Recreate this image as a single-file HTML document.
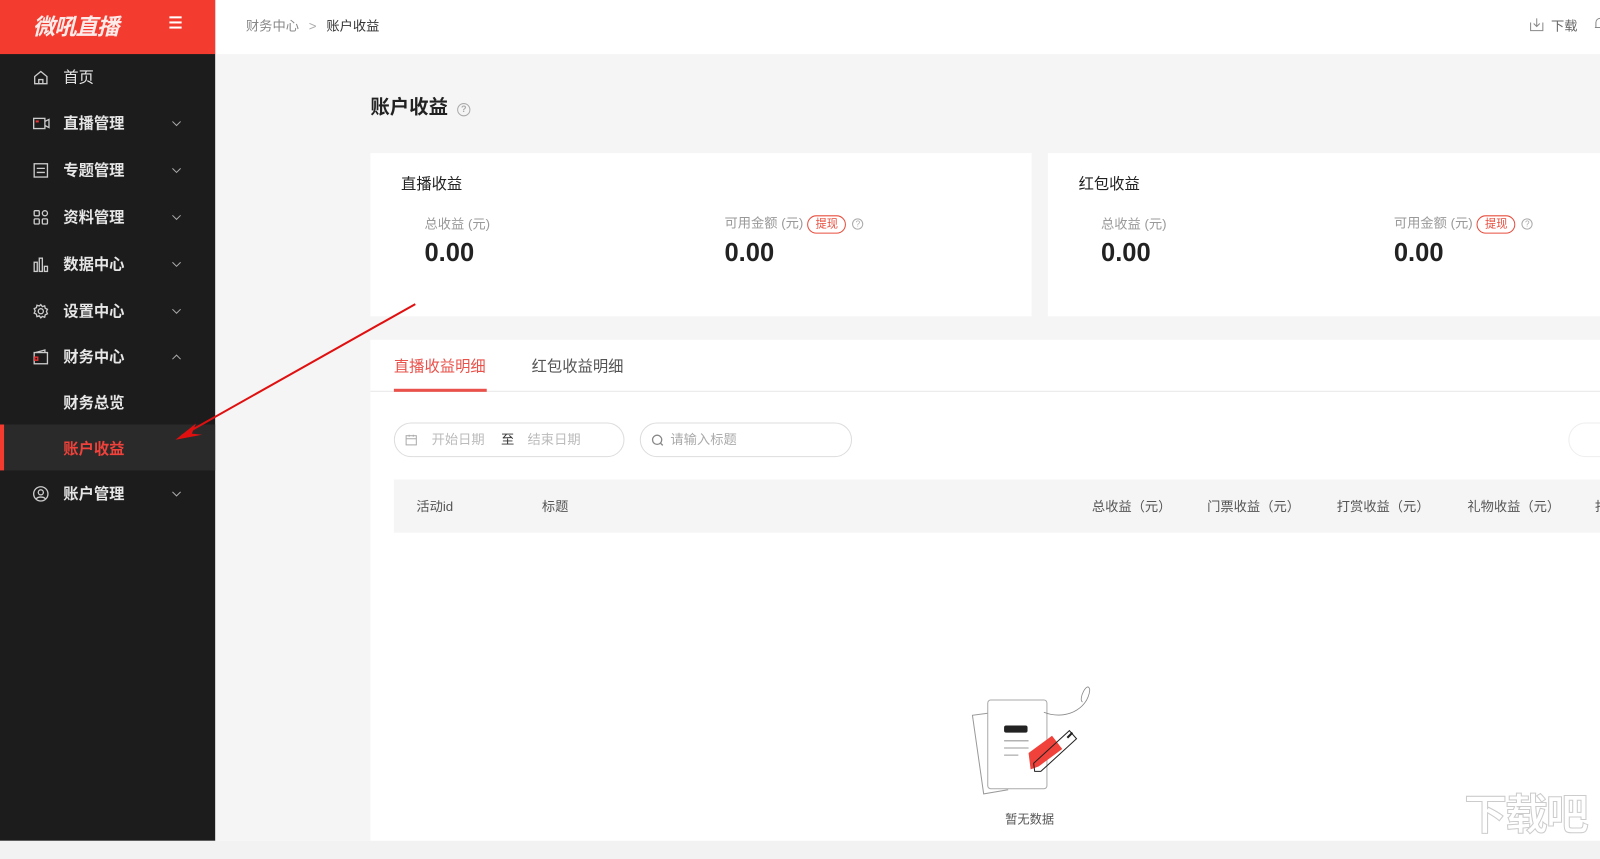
<!DOCTYPE html>
<html><head><meta charset="utf-8"><style>
*{margin:0;padding:0;box-sizing:border-box}
body{width:1600px;height:842px;overflow:hidden;background:#f2f2f2;font-family:"Liberation Sans","Noto Sans CJK SC",sans-serif;position:relative}
#wrap{position:absolute;left:0;top:0;width:1568px;height:825px;transform:scale(1.0204);transform-origin:0 0;background:#fff}
.abs{position:absolute}
#side{left:0;top:0;width:211px;height:824px;background:#1c1c1c}
#logo{left:0;top:0;width:211px;height:53px;background:#f33b2f}
.mi{position:absolute;left:0;width:211px;height:46px;color:#e6e6e6;font-size:15px;font-weight:bold;line-height:50px}
.mi .t{position:absolute;left:62px}
.mi svg.ic{position:absolute;left:32px;top:16px}
.mi .ch{position:absolute;left:168px;top:20px}
#main{left:211px;top:53px;width:1389px;height:771px;background:#f5f5f5}
#top{left:211px;top:0;width:1389px;height:53px;background:#fff}
.card{background:#fff;position:absolute}
.lbl{color:#999;font-size:13px;position:absolute}
.num{color:#222;font-size:25px;font-weight:bold;position:absolute}
.tag{display:inline-block;border:1px solid #e74c3c;color:#e74c3c;border-radius:10px;font-size:11px;padding:0 7px;line-height:16px;margin-left:4px}
.q{display:inline-block;width:11px;height:11px;border:1px solid #aaa;border-radius:50%;font-size:8px;line-height:9px;text-align:center;color:#aaa;margin-left:6px;vertical-align:1px}
.th{position:absolute;top:486px;font-size:13px;color:#555}
</style></head><body>
<div id="wrap">
<div id="side" class="abs"></div>
<div id="logo" class="abs">
 <div class="abs" style="left:32px;top:9px;color:#fff;font-size:22px;font-style:italic;font-weight:bold;letter-spacing:-1px;opacity:.9">微吼直播</div>
 <div class="abs" style="left:166px;top:16px;width:12px;height:2px;background:#fff;box-shadow:0 5px 0 #fff,0 10px 0 #fff"></div>
</div>
<div class="mi" style="top:52px;font-weight:normal"><svg class="ic" width="16" height="16" viewBox="0 0 16 16" fill="none" stroke="#ccc" stroke-width="1.3"><path d="M2 7L8 2l6 5v7H2z M6 14v-4h4v4"/></svg><span class="t">首页</span></div>
<div class="mi" style="top:97px"><svg class="ic" width="18" height="16" viewBox="0 0 18 16" fill="none" stroke="#ccc" stroke-width="1.3"><rect x="1" y="3" width="11" height="10"/><path d="M12 6l4-2v8l-4-2"/><rect x="3" y="5" width="3" height="2" fill="#e33" stroke="none"/></svg><span class="t">直播管理</span><svg class="ch" width="10" height="8"><path d="M1 2l4 4 4-4" stroke="#aaa" fill="none"/></svg></div>
<div class="mi" style="top:143px"><svg class="ic" width="16" height="16" viewBox="0 0 16 16" fill="none" stroke="#ccc" stroke-width="1.3"><rect x="1.5" y="1.5" width="13" height="13"/><path d="M4 6h8M4 10h8"/></svg><span class="t">专题管理</span><svg class="ch" width="10" height="8"><path d="M1 2l4 4 4-4" stroke="#aaa" fill="none"/></svg></div>
<div class="mi" style="top:189px"><svg class="ic" width="16" height="16" viewBox="0 0 16 16" fill="none" stroke="#ccc" stroke-width="1.3"><rect x="1.5" y="1.5" width="5" height="5" rx="1"/><rect x="9.5" y="1.5" width="5" height="5" rx="2.5"/><rect x="1.5" y="9.5" width="5" height="5" rx="1"/><rect x="9.5" y="9.5" width="5" height="5" rx="1"/></svg><span class="t">资料管理</span><svg class="ch" width="10" height="8"><path d="M1 2l4 4 4-4" stroke="#aaa" fill="none"/></svg></div>
<div class="mi" style="top:235px"><svg class="ic" width="16" height="16" viewBox="0 0 16 16" fill="none" stroke="#ccc" stroke-width="1.3"><rect x="1.5" y="6" width="3" height="9"/><rect x="6.5" y="2" width="3" height="13"/><rect x="11.5" y="10" width="3" height="5"/></svg><span class="t">数据中心</span><svg class="ch" width="10" height="8"><path d="M1 2l4 4 4-4" stroke="#aaa" fill="none"/></svg></div>
<div class="mi" style="top:281px"><svg class="ic" width="16" height="16" viewBox="0 0 16 16" fill="none" stroke="#ccc" stroke-width="1.3"><circle cx="8" cy="8" r="2.5"/><path d="M8 1.5l1.5 2 2.3-.8.5 2.4 2.2 1-1 2.2 1 2.2-2.2 1-.5 2.4-2.3-.8L8 14.5l-1.5-2-2.3.8-.5-2.4-2.2-1 1-2.2-1-2.2 2.2-1 .5-2.4 2.3.8z"/></svg><span class="t">设置中心</span><svg class="ch" width="10" height="8"><path d="M1 2l4 4 4-4" stroke="#aaa" fill="none"/></svg></div>
<div class="mi" style="top:326px"><svg class="ic" width="16" height="16" viewBox="0 0 16 16" fill="none" stroke="#ccc" stroke-width="1.3"><rect x="1.5" y="3.5" width="13" height="11"/><path d="M3 3.5L12 1v2.5"/><rect x="2" y="8" width="3" height="3" stroke="#e33"/></svg><span class="t">财务中心</span><svg class="ch" width="10" height="8"><path d="M1 6l4-4 4 4" stroke="#aaa" fill="none"/></svg></div>
<div class="mi" style="top:371px"><span class="t">财务总览</span></div>
<div class="abs" style="left:0;top:416px;width:211px;height:45px;background:#2a2a2a"></div>
<div class="abs" style="left:0;top:416px;width:4px;height:45px;background:#f33b2f"></div>
<div class="mi" style="top:416px;color:#f0413a"><span class="t">账户收益</span></div>
<div class="mi" style="top:460px"><svg class="ic" width="16" height="16" viewBox="0 0 16 16" fill="none" stroke="#ccc" stroke-width="1.3"><circle cx="8" cy="8" r="7"/><circle cx="8" cy="6.5" r="2.5"/><path d="M3.5 13c1.5-2.5 7.5-2.5 9 0"/></svg><span class="t">账户管理</span><svg class="ch" width="10" height="8"><path d="M1 2l4 4 4-4" stroke="#aaa" fill="none"/></svg></div>

<div id="top" class="abs">
 <div class="abs" style="left:30px;top:15px;font-size:13px;color:#888">财务中心 <span style="margin:0 6px;color:#aaa">&gt;</span> <span style="color:#333">账户收益</span></div>
 <svg class="abs" style="left:1288px;top:17px" width="14" height="14" viewBox="0 0 14 14" fill="none" stroke="#888"><path d="M1 5v8h12V5M7 1v8M4 6l3 3 3-3"/></svg>
 <div class="abs" style="left:1309px;top:15px;font-size:13px;color:#666">下载</div>
 <svg class="abs" style="left:1350px;top:16px" width="14" height="14" viewBox="0 0 14 14" fill="none" stroke="#888"><path d="M3 11V6a4 4 0 018 0v5H2"/></svg>
</div>
<div id="main" class="abs"></div>
<div class="abs" style="left:363px;top:90px;font-size:19px;font-weight:bold;color:#222">账户收益<span class="q" style="margin-left:9px;width:13px;height:13px;font-size:9px;line-height:11px">?</span></div>

<div class="card" style="left:363px;top:150px;width:648px;height:160px">
 <div class="abs" style="left:30px;top:19px;font-size:15px;color:#222">直播收益</div>
 <div class="lbl" style="left:53px;top:59px">总收益 (元)</div>
 <div class="num" style="left:53px;top:84px;font-weight:600">0.00</div>
 <div class="lbl" style="left:347px;top:58px">可用金额 (元)<span class="tag">提现</span><span class="q">?</span></div>
 <div class="num" style="left:347px;top:84px;font-weight:600">0.00</div>
</div>
<div class="card" style="left:1027px;top:150px;width:573px;height:160px">
 <div class="abs" style="left:30px;top:19px;font-size:15px;color:#222">红包收益</div>
 <div class="lbl" style="left:52px;top:59px">总收益 (元)</div>
 <div class="num" style="left:52px;top:84px;font-weight:600">0.00</div>
 <div class="lbl" style="left:339px;top:58px">可用金额 (元)<span class="tag">提现</span><span class="q">?</span></div>
 <div class="num" style="left:339px;top:84px;font-weight:600">0.00</div>
</div>

<div class="card" style="left:363px;top:333px;width:1237px;height:491px">
 <div class="abs" style="left:0;top:50px;width:1237px;height:1px;background:#e8e8e8"></div>
 <div class="abs" style="left:23px;top:15px;font-size:15px;color:#e9514a">直播收益明细</div>
 <div class="abs" style="left:23px;top:48px;width:91px;height:3px;background:#e9514a"></div>
 <div class="abs" style="left:158px;top:15px;font-size:15px;color:#555">红包收益明细</div>
 <div class="abs" style="left:23px;top:81px;width:226px;height:34px;border:1px solid #ddd;border-radius:17px;font-size:13px;color:#bbb;line-height:32px">
  <svg class="abs" style="left:10px;top:10px" width="12" height="12" viewBox="0 0 12 12" fill="none" stroke="#aaa"><rect x="1" y="2" width="10" height="9"/><path d="M1 5h10M4 1v2M8 1v2"/></svg>
  <span class="abs" style="left:36px">开始日期</span><span class="abs" style="left:104px;color:#333">至</span><span class="abs" style="left:130px">结束日期</span></div>
 <div class="abs" style="left:264px;top:81px;width:208px;height:34px;border:1px solid #ddd;border-radius:17px;font-size:13px;color:#aaa;line-height:32px">
  <svg class="abs" style="left:10px;top:10px" width="13" height="13" viewBox="0 0 13 13" fill="none" stroke="#888" stroke-width="1.3"><circle cx="6" cy="6" r="4.5"/><path d="M9.5 9.5l2 2"/></svg>
  <span class="abs" style="left:29px">请输入标题</span></div>
 <div class="abs" style="left:1174px;top:81px;width:80px;height:34px;border:1px solid #eee;border-radius:17px"></div>
 <div class="abs" style="left:23px;top:137px;width:1214px;height:52px;background:#f5f5f5"></div>
</div>
<div class="th" style="left:408px">活动id</div>
<div class="th" style="left:531px">标题</div>
<div class="th" style="left:1070px">总收益（元）</div>
<div class="th" style="left:1183px">门票收益（元）</div>
<div class="th" style="left:1310px">打赏收益（元）</div>
<div class="th" style="left:1438px">礼物收益（元）</div>
<div class="th" style="left:1563px">打</div>

<svg class="abs" style="left:948px;top:666px" width="125" height="115" viewBox="0 0 125 115" fill="none">
 <path d="M20 33 L5 35 L16 112 L40 108" stroke="#999" stroke-width="1"/>
 <rect x="20" y="20" width="58" height="87" rx="3" stroke="#aaa" stroke-width="1"/>
 <rect x="36" y="45" width="23" height="7" rx="2" fill="#222"/>
 <path d="M36 60h24M36 67h24M36 74h14" stroke="#999"/>
 <path d="M60 72 L83 55 L93 68 L70 85 L62 88Z" fill="#f0413a"/>
 <path d="M72 90 L107 58 L100 50 L65 82 L66 90Z" stroke="#222" stroke-width="1"/>
 <path d="M98 57 l5 -5" stroke="#222" stroke-width="2"/>
 <path d="M75 32 C95 40 118 30 120 10 C118 0 108 20 113 22" stroke="#888" stroke-width=".8"/>
</svg>
<div class="abs" style="left:985px;top:794px;font-size:12px;color:#555">暂无数据</div>

<svg class="abs" style="left:170px;top:295px" width="242" height="140"><path d="M237 3 L8 132" stroke="#e01010" stroke-width="2"/><path d="M2 136 L22 120 L18 130 L28 131Z" fill="#e01010"/></svg>
<div class="abs" style="left:0;top:824px;width:1600px;height:18px;background:#f2f2f2"></div>
<div class="abs" style="left:1435px;top:765px;font-size:42px;color:#fff;font-weight:bold;letter-spacing:-2px;-webkit-text-stroke:1px #ccc">下载吧</div>
</div>
</body></html>
